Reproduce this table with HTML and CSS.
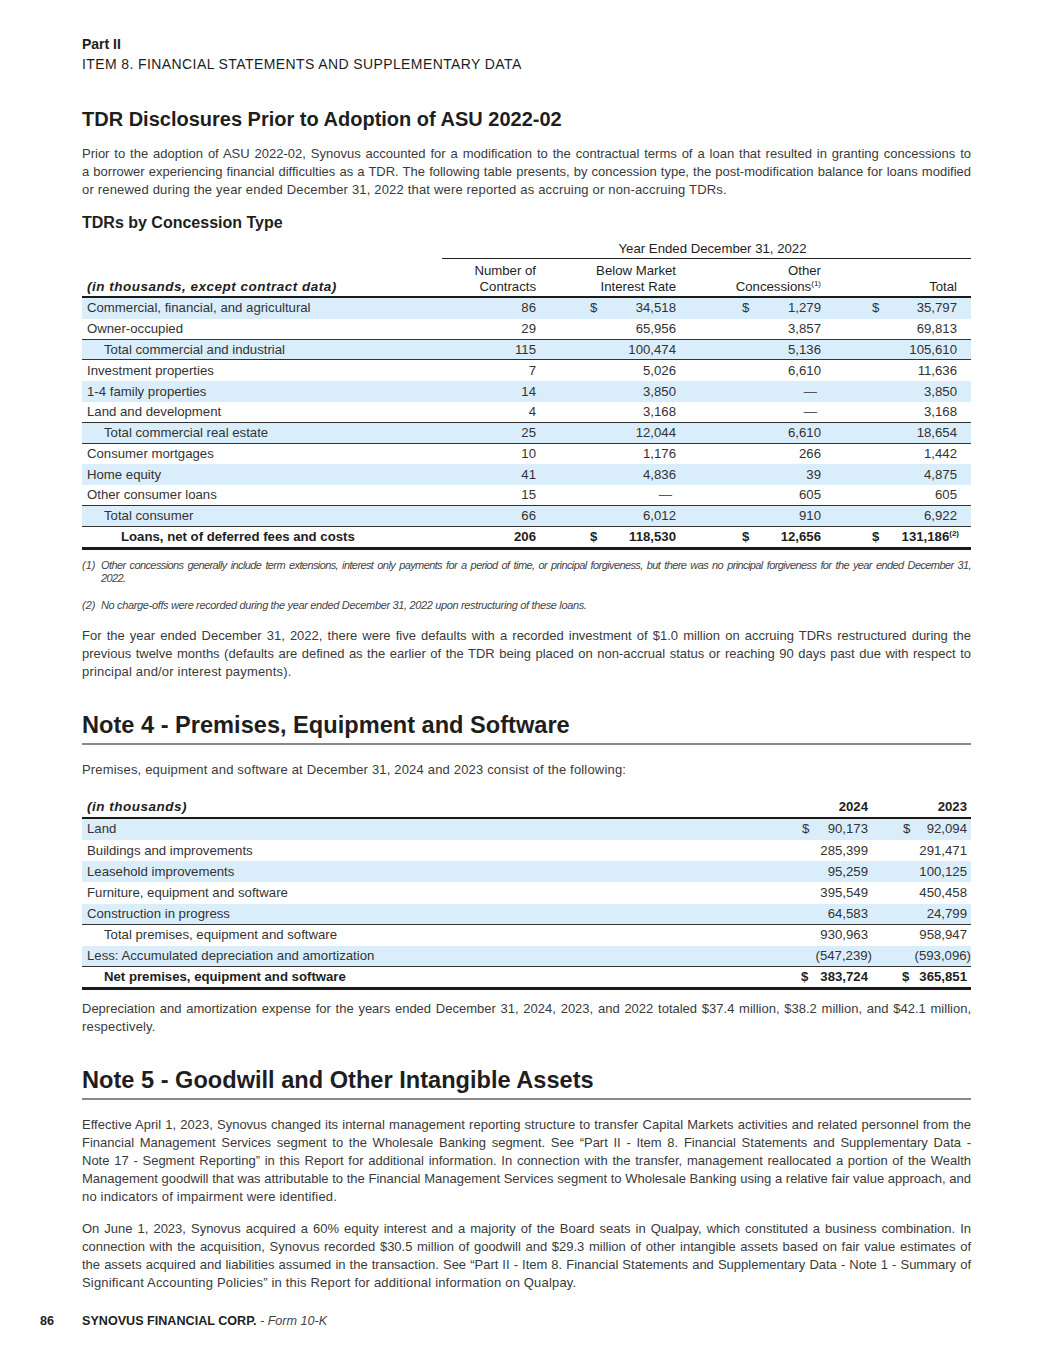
FILE: index.html
```html
<!DOCTYPE html>
<html lang="en">
<head>
<meta charset="utf-8">
<title>Synovus 10-K page 86</title>
<link rel="stylesheet" href="styles.css">
</head>
<body>
<div class="page">
  <header class="running">
    <div class="part">Part II</div>
    <div class="item">ITEM 8. FINANCIAL STATEMENTS AND SUPPLEMENTARY DATA</div>
  </header>

  <h2 class="h-section">TDR Disclosures Prior to Adoption of ASU 2022-02</h2>
  <p class="para">
    <span class="ln">Prior to the adoption of ASU 2022-02, Synovus accounted for a modification to the contractual terms of a loan that resulted in granting concessions to</span>
    <span class="ln">a borrower experiencing financial difficulties as a TDR. The following table presents, by concession type, the post-modification balance for loans modified</span>
    <span class="ln last">or renewed during the year ended December 31, 2022 that were reported as accruing or non-accruing TDRs.</span>
  </p>

  <h3 class="h-sub">TDRs by Concession Type</h3>

  <div class="t1">
    <div class="t1-year">Year Ended December 31, 2022</div>
    <div class="t1-row t1-head">
      <div class="lbl head-lbl">(in thousands, except contract data)</div>
      <div class="num c2">Number of<br>Contracts</div>
      <div class="num c3">Below Market<br>Interest Rate</div>
      <div class="num c4">Other<br>Concessions<sup>(1)</sup></div>
      <div class="num c5">Total</div>
    </div>

    <div class="t1-row shade"><div class="lbl">Commercial, financial, and agricultural</div><div class="num c2">86</div><div class="money c3"><span class="cur">$</span><span>34,518</span></div><div class="money c4"><span class="cur">$</span><span>1,279</span></div><div class="money c5"><span class="cur">$</span><span>35,797</span></div></div>
    <div class="t1-row rule"><div class="lbl">Owner-occupied</div><div class="num c2">29</div><div class="money c3"><span>65,956</span></div><div class="money c4"><span>3,857</span></div><div class="money c5"><span>69,813</span></div></div>
    <div class="t1-row shade rule"><div class="lbl ind">Total commercial and industrial</div><div class="num c2">115</div><div class="money c3"><span>100,474</span></div><div class="money c4"><span>5,136</span></div><div class="money c5"><span>105,610</span></div></div>
    <div class="t1-row"><div class="lbl">Investment properties</div><div class="num c2">7</div><div class="money c3"><span>5,026</span></div><div class="money c4"><span>6,610</span></div><div class="money c5"><span>11,636</span></div></div>
    <div class="t1-row shade"><div class="lbl">1-4 family properties</div><div class="num c2">14</div><div class="money c3"><span>3,850</span></div><div class="money c4"><span class="dash">—</span></div><div class="money c5"><span>3,850</span></div></div>
    <div class="t1-row rule"><div class="lbl">Land and development</div><div class="num c2">4</div><div class="money c3"><span>3,168</span></div><div class="money c4"><span class="dash">—</span></div><div class="money c5"><span>3,168</span></div></div>
    <div class="t1-row shade rule"><div class="lbl ind">Total commercial real estate</div><div class="num c2">25</div><div class="money c3"><span>12,044</span></div><div class="money c4"><span>6,610</span></div><div class="money c5"><span>18,654</span></div></div>
    <div class="t1-row"><div class="lbl">Consumer mortgages</div><div class="num c2">10</div><div class="money c3"><span>1,176</span></div><div class="money c4"><span>266</span></div><div class="money c5"><span>1,442</span></div></div>
    <div class="t1-row shade"><div class="lbl">Home equity</div><div class="num c2">41</div><div class="money c3"><span>4,836</span></div><div class="money c4"><span>39</span></div><div class="money c5"><span>4,875</span></div></div>
    <div class="t1-row rule"><div class="lbl">Other consumer loans</div><div class="num c2">15</div><div class="money c3"><span class="dash">—</span></div><div class="money c4"><span>605</span></div><div class="money c5"><span>605</span></div></div>
    <div class="t1-row shade rule"><div class="lbl ind">Total consumer</div><div class="num c2">66</div><div class="money c3"><span>6,012</span></div><div class="money c4"><span>910</span></div><div class="money c5"><span>6,922</span></div></div>
    <div class="t1-row grand"><div class="lbl ind2">Loans, net of deferred fees and costs</div><div class="num c2">206</div><div class="money c3"><span class="cur">$</span><span>118,530</span></div><div class="money c4"><span class="cur">$</span><span>12,656</span></div><div class="money c5"><span class="cur">$</span><span>131,186<sup>(2)</sup></span></div></div>
  </div>

  <div class="notes">
    <div class="fn fn1"><span class="fn-mark">(1)</span><span class="fn-text"><span class="ln">Other concessions generally include term extensions, interest only payments for a period of time, or principal forgiveness, but there was no principal forgiveness for the year ended December 31,</span><span class="ln fn-last">2022.</span></span></div>
    <div class="fn fn2"><span class="fn-mark">(2)</span><span class="fn-text">No charge-offs were recorded during the year ended December 31, 2022 upon restructuring of these loans.</span></div>
  </div>

  <p class="para para-after-fn">
    <span class="ln">For the year ended December 31, 2022, there were five defaults with a recorded investment of $1.0 million on accruing TDRs restructured during the</span>
    <span class="ln">previous twelve months (defaults are defined as the earlier of the TDR being placed on non-accrual status or reaching 90 days past due with respect to</span>
    <span class="ln last">principal and/or interest payments).</span>
  </p>

  <h2 class="h-note">Note 4 - Premises, Equipment and Software</h2>
  <p class="para para-note"><span class="ln last">Premises, equipment and software at December 31, 2024 and 2023 consist of the following:</span></p>

  <div class="t2">
    <div class="t2-row t2-head"><div class="lbl head-lbl">(in thousands)</div><div class="num d1">2024</div><div class="num d2">2023</div></div>
    <div class="t2-row shade"><div class="lbl">Land</div><div class="money d1"><span class="cur">$</span><span>90,173</span></div><div class="money d2"><span class="cur">$</span><span>92,094</span></div></div>
    <div class="t2-row"><div class="lbl">Buildings and improvements</div><div class="money d1"><span>285,399</span></div><div class="money d2"><span>291,471</span></div></div>
    <div class="t2-row shade"><div class="lbl">Leasehold improvements</div><div class="money d1"><span>95,259</span></div><div class="money d2"><span>100,125</span></div></div>
    <div class="t2-row"><div class="lbl">Furniture, equipment and software</div><div class="money d1"><span>395,549</span></div><div class="money d2"><span>450,458</span></div></div>
    <div class="t2-row shade rule"><div class="lbl">Construction in progress</div><div class="money d1"><span>64,583</span></div><div class="money d2"><span>24,799</span></div></div>
    <div class="t2-row"><div class="lbl ind">Total premises, equipment and software</div><div class="money d1"><span>930,963</span></div><div class="money d2"><span>958,947</span></div></div>
    <div class="t2-row shade rule"><div class="lbl">Less: Accumulated depreciation and amortization</div><div class="money d1"><span class="neg">(547,239)</span></div><div class="money d2"><span class="neg">(593,096)</span></div></div>
    <div class="t2-row grand"><div class="lbl ind">Net premises, equipment and software</div><div class="money d1 tight"><span class="cur">$</span><span>383,724</span></div><div class="money d2 tight"><span class="cur">$</span><span>365,851</span></div></div>
  </div>

  <p class="para para-after-t2">
    <span class="ln">Depreciation and amortization expense for the years ended December 31, 2024, 2023, and 2022 totaled $37.4 million, $38.2 million, and $42.1 million,</span>
    <span class="ln last">respectively.</span>
  </p>

  <h2 class="h-note">Note 5 - Goodwill and Other Intangible Assets</h2>
  <p class="para para-note">
    <span class="ln">Effective April 1, 2023, Synovus changed its internal management reporting structure to transfer Capital Markets activities and related personnel from the</span>
    <span class="ln">Financial Management Services segment to the Wholesale Banking segment. See “Part II - Item 8. Financial Statements and Supplementary Data -</span>
    <span class="ln">Note 17 - Segment Reporting” in this Report for additional information. In connection with the transfer, management reallocated a portion of the Wealth</span>
    <span class="ln">Management goodwill that was attributable to the Financial Management Services segment to Wholesale Banking using a relative fair value approach, and</span>
    <span class="ln last">no indicators of impairment were identified.</span>
  </p>
  <p class="para para-next">
    <span class="ln">On June 1, 2023, Synovus acquired a 60% equity interest and a majority of the Board seats in Qualpay, which constituted a business combination. In</span>
    <span class="ln">connection with the acquisition, Synovus recorded $30.5 million of goodwill and $29.3 million of other intangible assets based on fair value estimates of</span>
    <span class="ln">the assets acquired and liabilities assumed in the transaction. See “Part II - Item 8. Financial Statements and Supplementary Data - Note 1 - Summary of</span>
    <span class="ln last">Significant Accounting Policies” in this Report for additional information on Qualpay.</span>
  </p>

  <footer class="foot">
    <span class="pg">86</span>
    <span class="corp">SYNOVUS FINANCIAL CORP.</span><span class="form"> - Form 10-K</span>
  </footer>
</div>
</body>
</html>
```

FILE: styles.css
```css
* { box-sizing: border-box; }
html, body { margin: 0; padding: 0; background: #fff; }
body {
  font-family: "Liberation Sans", Arial, sans-serif;
  color: #3a3a3a;
  width: 1055px;
}
.page { padding: 34px 84px 0 82px; }

.running { line-height: 20px; font-size: 14px; color: #1e1e1e; }
.part { font-weight: bold; }
.item { letter-spacing: 0.4px; }

.h-section {
  margin: 33px 0 0;
  font-size: 20px;
  line-height: 24px;
  font-weight: bold;
  color: #1e1e1e;
}
.h-sub {
  margin: 14px 0 0;
  font-size: 16px;
  line-height: 20px;
  font-weight: bold;
  color: #1e1e1e;
}
.h-note {
  margin: 30px 0 0;
  font-size: 23.6px;
  line-height: 28px;
  font-weight: bold;
  color: #1e1e1e;
  padding-bottom: 4px;
  border-bottom: 2px solid #8a8a8a;
}

.para {
  margin: 14px 0 0;
  font-size: 13px;
  line-height: 18px;
}
.ln { display: block; text-align: justify; text-align-last: justify; }
.ln.last { text-align-last: left; letter-spacing: 0.18px; }
.para-after-fn { margin-top: 15px; }
.para-note { margin-top: 16px; }
.para-after-t2 { margin-top: 10px; }
.para-next { margin-top: 14px; }

/* table 1 */
.t1 { margin-top: 8px; font-size: 13.2px; color: #333; }
.t1-year {
  margin-left: 360px;
  text-align: center;
  line-height: 16px;
  padding-left: 12px;
  border-bottom: 1.5px solid #222;
  color: #1e1e1e;
  height: 18px;
}
.t1-row {
  display: grid;
  grid-template-columns: 360px 103px 140px 145px 141px;
  height: 20.8px;
  line-height: 20px;
  align-items: center;
}
.t1-head {
  height: auto;
  line-height: 16px;
  padding: 4px 0 1px;
  align-items: end;
  border-bottom: 2px solid #1a1a1a;
  color: #1e1e1e;
}
.head-lbl { font-weight: bold; font-style: italic; color: #1e1e1e; font-size: 13.5px; letter-spacing: 0.5px; }
.lbl { padding-left: 5px; white-space: nowrap; }
.lbl.ind { padding-left: 22px; }
.lbl.ind2 { padding-left: 39px; }
.num { text-align: right; padding-right: 9px; }
.t1-head .c5 { padding-right: 14px; }
.money { display: flex; justify-content: flex-end; white-space: nowrap; }
.money .cur { margin-right: auto; }
.t1 .c3.money { padding-left: 45px; padding-right: 9px; }
.t1 .c4.money { padding-left: 57px; padding-right: 9px; }
.t1 .c5.money { padding-left: 42px; padding-right: 14px; }
.t1 .grand .c5.money { padding-right: 12px; }
.dash { margin-right: 4px; color: #555; }
sup { font-size: 8px; line-height: 0; vertical-align: 5px; }
.shade { background: #daedfb; }
.rule { border-bottom: 1px solid #333; }
.grand { font-weight: bold; color: #1e1e1e; border-bottom: 3px solid #1a1a1a; height: 23px; line-height: 20px; }
.t1 .grand { align-items: start; padding-top: 0; }

/* footnotes */
.notes { margin-top: 9px; font-size: 11px; line-height: 13px; font-style: italic; color: #444; }
.fn { display: flex; letter-spacing: -0.35px; }
.fn1 { letter-spacing: -0.6px; }
.fn2 { margin-top: 14px; }
.fn-mark { flex: 0 0 19px; letter-spacing: 0; }
.fn-text { flex: 1; min-width: 0; }
.fn .ln.fn-last { text-align-last: left; }

/* table 2 */
.t2 { margin-top: 18px; font-size: 13.2px; color: #333; }
.t2-row {
  display: grid;
  grid-template-columns: 698px 95px 96px;
  height: 21.2px;
  line-height: 20px;
  align-items: center;
}
.t2-head { height: 22px; border-bottom: 2px solid #1a1a1a; color: #1e1e1e; font-weight: bold; }
.t2 .d1.num { padding-right: 7px; }
.t2 .d2.num { padding-right: 4px; }
.t2 .d1.money { padding-left: 22px; padding-right: 7px; }
.t2 .d2.money { padding-left: 28px; padding-right: 4px; }
.t2 .money.tight { padding-left: 21px; }
.t2 .d2.money.tight { padding-left: 27px; }
.neg { margin-right: -4px; }
.t2 .grand { height: 23px; }

/* footer */
.foot { margin: 20px 0 0 -42px; font-size: 12.6px; line-height: 18px; color: #1e1e1e; display: flex; }
.pg { font-weight: bold; width: 42px; }
.corp { font-weight: bold; }
.form { font-style: italic; color: #444; white-space: pre; }
```
